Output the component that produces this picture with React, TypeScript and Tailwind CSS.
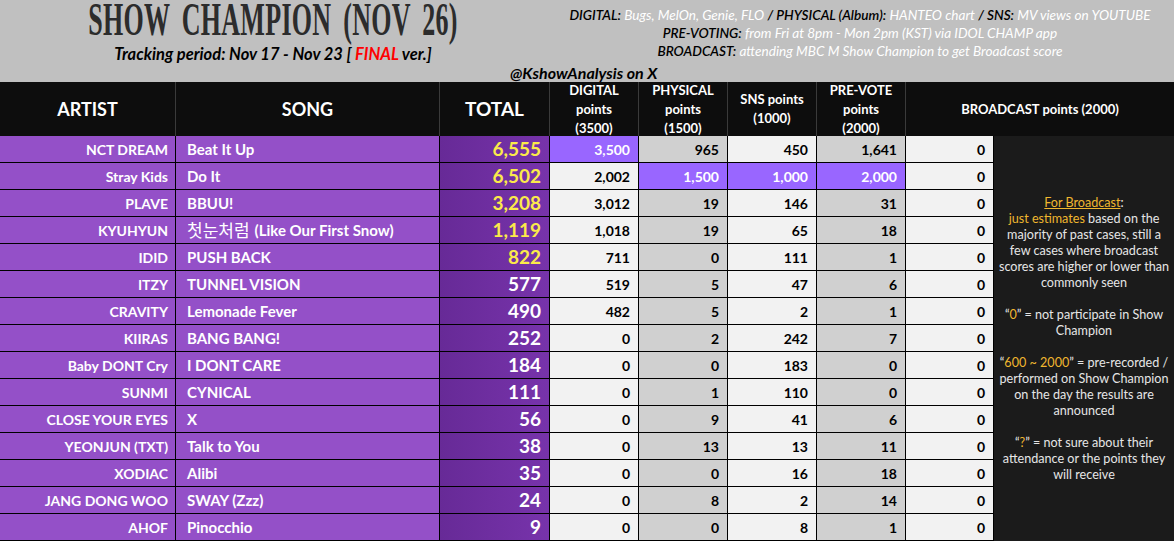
import React from "react";

type Row = {
  artist: string;
  song: React.ReactNode;
  total: string;
  yellow: boolean;
  d: string;
  p: string;
  s: string;
  v: string;
  hl?: { d?: boolean; p?: boolean; s?: boolean; v?: boolean };
};

const rows: Row[] = [
  { artist: "NCT DREAM", song: "Beat It Up", total: "6,555", yellow: true, d: "3,500", p: "965", s: "450", v: "1,641", hl: { d: true } },
  { artist: "Stray Kids", song: "Do It", total: "6,502", yellow: true, d: "2,002", p: "1,500", s: "1,000", v: "2,000", hl: { p: true, s: true, v: true } },
  { artist: "PLAVE", song: "BBUU!", total: "3,208", yellow: true, d: "3,012", p: "19", s: "146", v: "31" },
  {
    artist: "KYUHYUN",
    song: (
      <>
        <span className="font-['Noto_Sans_CJK_KR',sans-serif] font-normal text-[17px] mr-[5px]">첫눈처럼</span>
        <span>(Like Our First Snow)</span>
      </>
    ),
    total: "1,119",
    yellow: true,
    d: "1,018",
    p: "19",
    s: "65",
    v: "18",
  },
  { artist: "IDID", song: "PUSH BACK", total: "822", yellow: true, d: "711", p: "0", s: "111", v: "1" },
  { artist: "ITZY", song: "TUNNEL VISION", total: "577", yellow: false, d: "519", p: "5", s: "47", v: "6" },
  { artist: "CRAVITY", song: "Lemonade Fever", total: "490", yellow: false, d: "482", p: "5", s: "2", v: "1" },
  { artist: "KIIRAS", song: "BANG BANG!", total: "252", yellow: false, d: "0", p: "2", s: "242", v: "7" },
  { artist: "Baby DONT Cry", song: "I DONT CARE", total: "184", yellow: false, d: "0", p: "0", s: "183", v: "0" },
  { artist: "SUNMI", song: "CYNICAL", total: "111", yellow: false, d: "0", p: "1", s: "110", v: "0" },
  { artist: "CLOSE YOUR EYES", song: "X", total: "56", yellow: false, d: "0", p: "9", s: "41", v: "6" },
  { artist: "YEONJUN (TXT)", song: "Talk to You", total: "38", yellow: false, d: "0", p: "13", s: "13", v: "11" },
  { artist: "XODIAC", song: "Alibi", total: "35", yellow: false, d: "0", p: "0", s: "16", v: "18" },
  { artist: "JANG DONG WOO", song: "SWAY (Zzz)", total: "24", yellow: false, d: "0", p: "8", s: "2", v: "14" },
  { artist: "AHOF", song: "Pinocchio", total: "9", yellow: false, d: "0", p: "0", s: "8", v: "1" },
];

const HL = "bg-[#9966ff] text-white";
const LIGHT = "bg-[#f2f2f2] text-black";
const GRAY = "bg-[#d0d0d0] text-black";
const NUM = "flex items-center justify-end pr-2 border-r border-b border-black text-[14px] font-bold";

function Header() {
  const base = "bg-[#0d0d0d] text-white font-bold flex items-center justify-center text-center border-r border-[#3a3a3a]";
  const small = base + " text-[13px] leading-[19px]";
  return (
    <>
      <div className={base + " text-[18px]"}>ARTIST</div>
      <div className={base + " text-[18px]"}>SONG</div>
      <div className={base + " text-[19px]"}>TOTAL</div>
      <div className={small}>
        DIGITAL<br />points<br />(3500)
      </div>
      <div className={small}>
        PHYSICAL<br />points<br />(1500)
      </div>
      <div className={small}>
        SNS points<br />(1000)
      </div>
      <div className={small}>
        PRE-VOTE<br />points<br />(2000)
      </div>
      <div className={small + " col-span-2 border-r-0"}>BROADCAST points (2000)</div>
    </>
  );
}

function Notes() {
  const y = "text-[#f0b72f]";
  return (
    <div className="col-start-9 row-start-2 row-span-15 bg-[#1b1b1b] text-[#e6e6e6] text-[12.6px] leading-[16px] text-center flex flex-col items-center justify-center whitespace-nowrap">
      <div>
        <span className={y + " underline"}>For Broadcast</span>:
      </div>
      <div>
        <span className={y}>just estimates</span> based on the
      </div>
      <div>majority of past cases, still a</div>
      <div>few cases where broadcast</div>
      <div>scores are higher or lower than</div>
      <div>commonly seen</div>
      <div className="mt-[16px]">
        “<span className={y}>0</span>” = not participate in Show
      </div>
      <div>Champion</div>
      <div className="mt-[16px]">
        “<span className={y}>600 ~ 2000</span>” = pre-recorded /
      </div>
      <div>performed on Show Champion</div>
      <div>on the day the results are</div>
      <div>announced</div>
      <div className="mt-[16px]">
        “<span className={y}>?</span>” = not sure about their
      </div>
      <div>attendance or the points they</div>
      <div>will receive</div>
    </div>
  );
}

export default function App() {
  return (
    <div className="w-[1174px] h-[541px] overflow-hidden bg-[#1b1b1b] font-['Lato',sans-serif]">
      <div className="h-[82px] bg-[#c0c0c0] flex flex-col">
        <div className="flex h-[64px]">
          <div className="w-[546px] flex flex-col items-center">
            <div className="h-[43px] w-full flex items-center justify-center">
              <span className="inline-block scale-y-[1.75] font-['Liberation_Serif',serif] font-bold text-[26px] leading-none text-[#2c2c2c] tracking-[0.3px] [word-spacing:5px] whitespace-nowrap">
                SHOW CHAMPION (NOV 26)
              </span>
            </div>
            <div className="mt-[2px] text-[16.5px] leading-[20px] italic font-bold text-black whitespace-nowrap">
              Tracking period: Nov 17 - Nov 23 [ <span className="text-[#ff0000]">FINAL</span> ver.]
            </div>
          </div>
          <div className="flex-1 flex flex-col items-center pt-[6px] text-[13.6px] italic leading-[18px] whitespace-nowrap">
            <div>
              <b className="text-black font-semibold">DIGITAL:</b> <span className="text-white">Bugs, MelOn, Genie, FLO</span>{" "}
              <b className="text-black font-semibold">/ PHYSICAL (Album):</b> <span className="text-white">HANTEO chart</span>{" "}
              <b className="text-black font-semibold">/ SNS:</b> <span className="text-white">MV views on YOUTUBE</span>
            </div>
            <div>
              <b className="text-black font-semibold">PRE-VOTING:</b>{" "}
              <span className="text-white">from Fri at 8pm - Mon 2pm (KST) via IDOL CHAMP app</span>
            </div>
            <div>
              <b className="text-black font-semibold">BROADCAST:</b>{" "}
              <span className="text-white">attending MBC M Show Champion to get Broadcast score</span>
            </div>
          </div>
        </div>
        <div className="pl-[510px] h-[18px] text-[16px] leading-[18px] italic font-bold text-black">@KshowAnalysis on X</div>
      </div>

      <div className="grid grid-cols-[176px_264px_110px_89px_89px_89px_89px_88px_180px] grid-rows-[54px_repeat(15,27px)]">
        <Header />
        <Notes />
        {rows.map((r, i) => (
          <React.Fragment key={i}>
            <div className="bg-[#9450c8] text-white font-bold text-[14px] flex items-center justify-end pr-[7px] border-r border-b border-black whitespace-nowrap">
              {r.artist}
            </div>
            <div className="bg-[#9450c8] text-white font-bold text-[15px] flex items-center pl-[11px] border-r border-b border-black whitespace-nowrap">
              {r.song}
            </div>
            <div
              className={
                "bg-gradient-to-r from-[#672a97] to-[#7733ab] font-bold text-[19px] flex items-center justify-end pr-2 border-r border-b border-black " +
                (r.yellow ? "text-[#fbea4a]" : "text-white")
              }
            >
              {r.total}
            </div>
            <div className={NUM + " " + (r.hl?.d ? HL : LIGHT)}>{r.d}</div>
            <div className={NUM + " " + (r.hl?.p ? HL : GRAY)}>{r.p}</div>
            <div className={NUM + " " + (r.hl?.s ? HL : LIGHT)}>{r.s}</div>
            <div className={NUM + " " + (r.hl?.v ? HL : GRAY)}>{r.v}</div>
            <div className={NUM + " " + LIGHT}>0</div>
          </React.Fragment>
        ))}
      </div>
    </div>
  );
}
